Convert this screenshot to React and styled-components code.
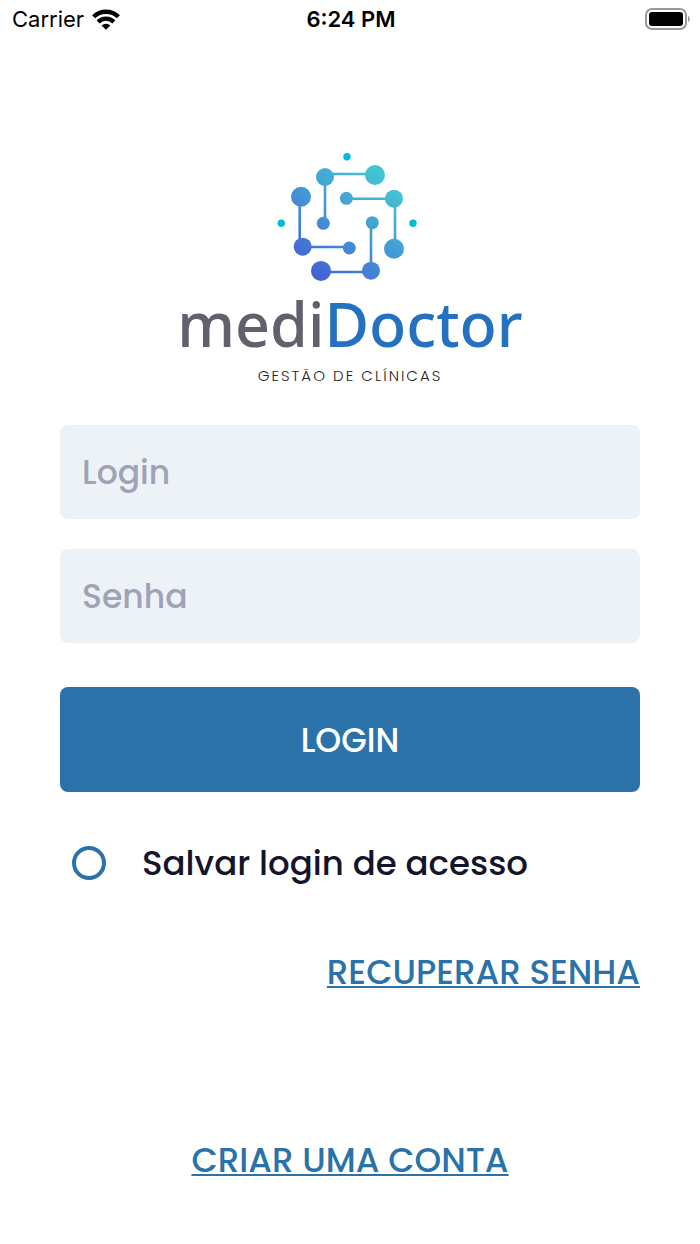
import React, { useState } from 'react';
import styled, { createGlobalStyle } from 'styled-components';

const GlobalStyle = createGlobalStyle`
  * {
    box-sizing: border-box;
  }

  body {
    margin: 0;
    background: #fff;
    font-family: Poppins, Inter, 'Open Sans', sans-serif;
  }
`;

const Screen = styled.div`
  display: flex;
  flex-direction: column;
`;

const StatusBar = styled.header`
  display: grid;
  grid-template-columns: 1fr auto 1fr;
  align-items: center;
  height: 38px;
  padding: 0 10px 0 12px;
  font-family: Inter, sans-serif;
  font-size: 22px;
  line-height: 28px;
  color: #000;
`;

const Carrier = styled.div`
  display: flex;
  align-items: center;
  gap: 8px;
`;

const Clock = styled.time`
  font-weight: 600;
`;

const BatteryIcon = styled.svg`
  justify-self: end;
`;

const Main = styled.main`
  display: flex;
  flex-direction: column;
  padding: 114px 60px 60px;
`;

const Brand = styled.div`
  display: flex;
  flex-direction: column;
  align-items: center;
  margin-bottom: 40px;
`;

const Wordmark = styled.h1`
  margin: 0;
  font-family: 'Noto Sans', sans-serif;
  font-size: 61px;
  font-weight: 500;
  line-height: 84px;
  color: #62606c;
`;

const WordmarkAccent = styled.span`
  color: #2371c0;
`;

const Tagline = styled.p`
  margin: 0;
  font-size: 15px;
  font-weight: 300;
  line-height: 19px;
  letter-spacing: 2px;
  text-transform: uppercase;
  color: #222;
`;

const Form = styled.form`
  display: flex;
  flex-direction: column;
`;

const Input = styled.input`
  width: 100%;
  height: 94px;
  margin-bottom: 30px;
  padding: 2px 22px 0;
  border: 0;
  border-radius: 8px;
  background: #edf2f7;
  color: #14142b;
  font-family: inherit;
  font-size: 33px;
  font-weight: 500;
  outline: none;

  &::placeholder {
    color: #a0a3b5;
    opacity: 1;
  }
`;

const SubmitButton = styled.button`
  height: 105px;
  margin-top: 14px;
  padding-top: 3px;
  border: 0;
  border-radius: 8px;
  background: #2a72a8;
  color: #fff;
  font-family: inherit;
  font-size: 33px;
  font-weight: 500;
  cursor: pointer;
`;

const SaveLogin = styled.label`
  display: flex;
  align-items: center;
  gap: 36px;
  margin-top: 48px;
  padding-left: 12px;
  font-size: 34px;
  font-weight: 500;
  line-height: 46px;
  color: #14142b;
  cursor: pointer;
`;

const Checkbox = styled.input`
  appearance: none;
  flex: none;
  width: 34px;
  height: 34px;
  margin: 0;
  border: 4px solid #2a72a8;
  border-radius: 50%;
  background: #fff;

  &:checked {
    background: #2a72a8;
    box-shadow: inset 0 0 0 4px #fff;
  }
`;

const TextLink = styled.a`
  align-self: ${({ $align }) => $align};
  margin-top: ${({ $gap }) => $gap}px;
  font-size: 34px;
  font-weight: 500;
  line-height: 48px;
  color: #2a72a8;
  text-decoration: underline;
  text-decoration-thickness: 2px;
  text-underline-offset: 2px;
  text-decoration-skip-ink: none;
`;

const WifiIcon = () => (
  <svg width="28" height="21" viewBox="0 0 28 21" aria-hidden="true">
    <g fill="none" stroke="#000" strokeWidth="4.4">
      <path d="M1.6 7.8a17.6 17.6 0 0 1 24.8 0" />
      <path d="M6.1 12.9a11.2 11.2 0 0 1 15.8 0" />
    </g>
    <path d="M14 20.7l-4.4-4.2a6.2 6.2 0 0 1 8.8 0z" />
  </svg>
);

const Battery = () => (
  <BatteryIcon width="45" height="22" viewBox="0 0 45 22" aria-hidden="true">
    <rect x="1" y="1" width="40" height="20" rx="6" fill="none" stroke="#999" strokeWidth="2" />
    <rect x="4" y="4" width="34" height="14" rx="3" fill="#000" />
    <path d="M43 8c2.3 1 2.3 5 0 6z" fill="#999" />
  </BatteryIcon>
);

const LogoMark = () => (
  <svg width="146" height="130" viewBox="277 152 146 130" aria-hidden="true">
    <defs>
      <linearGradient id="mark" gradientUnits="userSpaceOnUse" x1="304" y1="286" x2="386" y2="176">
        <stop offset="0" stopColor="#4455d4" />
        <stop offset="0.5" stopColor="#4492d4" />
        <stop offset="1" stopColor="#43c6d3" />
      </linearGradient>
    </defs>
    <g fill="none" stroke="url(#mark)" strokeWidth="2.6">
      <path d="M375 174H325V223" />
      <path d="M299.7 197V247H349" />
      <path d="M346 198.7H395V249" />
      <path d="M371 223V272H321" />
    </g>
    <g fill="url(#mark)">
      <circle cx="325" cy="177" r="9" />
      <circle cx="375" cy="175" r="10" />
      <circle cx="323.3" cy="223.3" r="6.5" />
      <circle cx="301" cy="196.7" r="10" />
      <circle cx="302.7" cy="246.7" r="9" />
      <circle cx="349.3" cy="248" r="6.5" />
      <circle cx="346.4" cy="198.3" r="6.5" />
      <circle cx="394" cy="198.7" r="9" />
      <circle cx="394" cy="248.7" r="10" />
      <circle cx="372.3" cy="222.7" r="6.5" />
      <circle cx="371" cy="270.7" r="9" />
      <circle cx="321" cy="270.9" r="10" />
    </g>
    <g fill="#00bcd8">
      <circle cx="347" cy="156.7" r="3.7" />
      <circle cx="281.3" cy="223.3" r="3.7" />
      <circle cx="413" cy="223.3" r="3.7" />
    </g>
  </svg>
);

const App = () => {
  const [login, setLogin] = useState('');
  const [password, setPassword] = useState('');
  const [saveLogin, setSaveLogin] = useState(false);

  const handleSubmit = event => {
    event.preventDefault();
  };

  return (
    <Screen>
      <GlobalStyle />
      <StatusBar>
        <Carrier>
          Carrier
          <WifiIcon />
        </Carrier>
        <Clock>6:24 PM</Clock>
        <Battery />
      </StatusBar>
      <Main>
        <Brand>
          <LogoMark />
          <Wordmark>
            medi<WordmarkAccent>Doctor</WordmarkAccent>
          </Wordmark>
          <Tagline>Gestão de Clínicas</Tagline>
        </Brand>
        <Form onSubmit={handleSubmit}>
          <Input
            type="text"
            aria-label="Login"
            placeholder="Login"
            value={login}
            onChange={e => setLogin(e.target.value)}
          />
          <Input
            type="password"
            aria-label="Senha"
            placeholder="Senha"
            value={password}
            onChange={e => setPassword(e.target.value)}
          />
          <SubmitButton type="submit">LOGIN</SubmitButton>
          <SaveLogin>
            <Checkbox
              type="checkbox"
              checked={saveLogin}
              onChange={e => setSaveLogin(e.target.checked)}
            />
            Salvar login de acesso
          </SaveLogin>
        </Form>
        <TextLink href="#recuperar" $align="flex-end" $gap={62}>RECUPERAR SENHA</TextLink>
        <TextLink href="#criar" $align="center" $gap={140}>CRIAR UMA CONTA</TextLink>
      </Main>
    </Screen>
  );
};

export default App;
